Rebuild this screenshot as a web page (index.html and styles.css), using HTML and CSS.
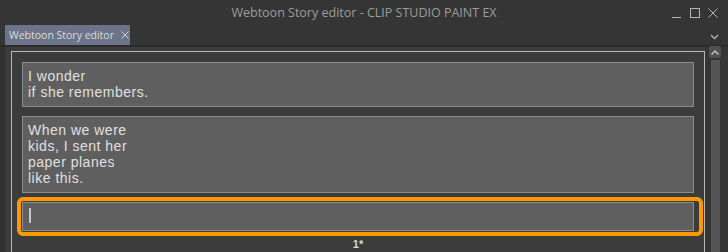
FILE: index.html
```html
<!DOCTYPE html>
<html>
<head>
    <title>Webtoon Story editor</title>
    <link rel="stylesheet" href="styles.css">
</head>
<body>
    <div class="titlebar">
        <div></div>
        <div class="title">Webtoon Story editor - CLIP STUDIO PAINT EX</div>
        <div class="controls">
            <svg width="10" height="10" viewBox="0 0 10 10"><path d="M0 9.5H9" stroke="#b4b4b4" fill="none"/></svg>
            <svg width="10" height="10" viewBox="0 0 10 10"><rect x="0.5" y="0.5" width="9" height="9" stroke="#b4b4b4" fill="none"/></svg>
            <svg width="10" height="10" viewBox="0 0 10 10"><path d="M0.5 0.5L9.5 9.5M9.5 0.5L0.5 9.5" stroke="#b4b4b4" fill="none"/></svg>
        </div>
    </div>
    <div class="tabrow">
        <div class="tab">
            <span class="tab-label">Webtoon Story editor</span>
            <svg class="tab-close" width="8" height="8" viewBox="0 0 8 8"><path d="M0.5 0.5L7.5 7.5M7.5 0.5L0.5 7.5" stroke="#d0d0d0" fill="none"/></svg>
        </div>
        <svg class="menu" width="9" height="6" viewBox="0 0 9 6"><path d="M1 1L4.5 4.5L8 1" stroke="#b0b0b0" stroke-width="1.4" fill="none"/></svg>
    </div>
    <div class="sep"></div>
    <div class="main">
        <div class="strip"></div>
        <div class="panel">
            <div class="frame">
                <div class="cell"><div class="box">I wonder<br>if she remembers.</div></div>
                <div class="cell"><div class="box">When we were<br>kids, I sent her<br>paper planes<br>like this.</div></div>
                <div class="cell active"><div class="box"><span class="caret"></span></div></div>
                <div class="page">1*</div>
            </div>
        </div>
        <div class="scroll">
            <div class="up">
                <svg width="8" height="5" viewBox="0 0 8 5"><path d="M0.5 4.5L4 1L7.5 4.5" stroke="#c8c8c8" stroke-width="1.3" fill="none"/></svg>
            </div>
            <div class="track"></div>
        </div>
    </div>
</body>
</html>
```

FILE: styles.css
```css
body
{
    margin: 0;
    width: 728px;
    height: 252px;
    overflow: hidden;
    background-color: #353535;
    font-family: "Liberation Sans", Arial, sans-serif;
}
.titlebar
{
    height: 24px;
    display: grid;
    grid-template-columns: 1fr auto 1fr;
    align-items: center;
}
.title
{
    font-family: "Open Sans", sans-serif;
    font-size: 12.5px;
    color: #9c9c9c;
    padding-top: 1px;
}
.controls
{
    justify-self: end;
    display: flex;
    gap: 8px;
    padding-right: 10px;
    padding-top: 2px;
}
.tabrow
{
    height: 21px;
    display: flex;
    justify-content: space-between;
    padding-left: 5px;
    padding-right: 9px;
}
.tab
{
    margin-top: 1px;
    height: 20px;
    width: 125px;
    box-sizing: border-box;
    padding-left: 4px;
    background-color: #6b7489;
    color: #dcdcdc;
    font-family: "Open Sans", sans-serif;
    font-size: 10.5px;
    display: flex;
    align-items: center;
    gap: 7px;
    white-space: nowrap;
}
.tab-close
{
    flex-shrink: 0;
}
.menu
{
    margin-top: 10px;
}
.sep
{
    height: 2px;
    background-color: #2c2c2c;
}
.main
{
    display: flex;
    height: 205px;
}
.strip
{
    width: 5px;
    background-color: #303030;
}
.panel
{
    width: 700px;
    background-color: #3c3c3c;
    padding: 4px 0 0 6px;
    box-sizing: border-box;
}
.frame
{
    height: 100%;
    box-sizing: border-box;
    border: 1px solid #b8b8b8;
    border-bottom: none;
    padding: 10px 10px 0 10px;
}
.cell
{
    margin-bottom: 9px;
}
.cell.active
{
    margin: -5px -9px 0 -5px;
    border: 4px solid #ff9900;
    border-radius: 6px;
    padding: 1px 5px 1px 1px;
}
.box
{
    background-color: #5f5f5f;
    border: 1px solid #8c8c8c;
    padding: 5px 5px 6px 5px;
    color: #e0e0e0;
    font-size: 14px;
    letter-spacing: 0.5px;
    line-height: 16px;
    min-height: 16px;
}
.caret
{
    display: inline-block;
    width: 2px;
    height: 15px;
    margin-left: 1px;
    background-color: #c8c8c8;
    vertical-align: top;
}
.page
{
    text-align: center;
    color: #d8d8d8;
    font-size: 11px;
    font-weight: bold;
    line-height: 16px;
}
.scroll
{
    width: 23px;
    background-color: #353535;
    padding: 0 7px 0 4px;
    box-sizing: border-box;
}
.up
{
    margin-top: -1px;
    height: 12px;
    background-color: #505050;
    border-radius: 2px;
    display: flex;
    align-items: center;
    justify-content: center;
}
.track
{
    margin: 2px 1px 0 2px;
    height: 200px;
    background-color: #555555;
}
```
